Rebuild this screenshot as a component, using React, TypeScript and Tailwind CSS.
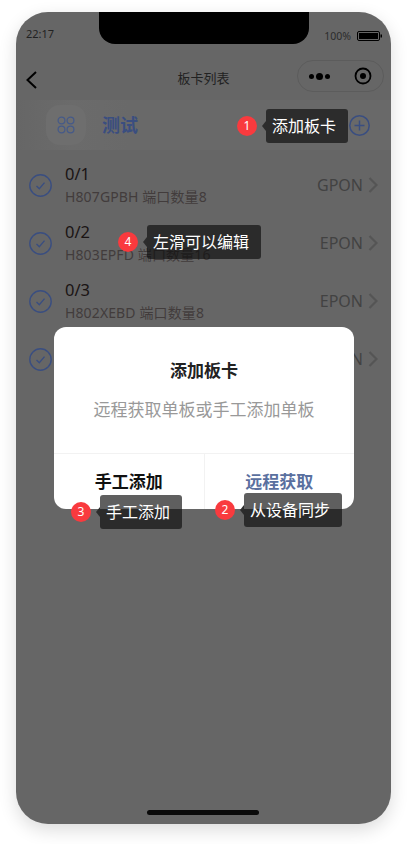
import React from "react";

function Chevron({ className }: { className: string }) {
  return (
    <svg className={className} viewBox="0 0 10 16" fill="none" stroke="currentColor" strokeWidth="2.2">
      <path d="M1.5 1 L8.5 8 L1.5 15" />
    </svg>
  );
}

function Check() {
  return (
    <svg className="w-[23px] h-[23px] shrink-0 text-[#3a4e80]" viewBox="0 0 23 23" fill="none" stroke="currentColor">
      <circle cx="11.5" cy="11.5" r="10.7" strokeWidth="1.4" />
      <path d="M7.5 12 L10.3 14.8 L15.5 8.6" strokeWidth="1.4" />
    </svg>
  );
}

function Row({ port, sub, kind }: { port: string; sub: string; kind: string }) {
  return (
    <div className="h-[58px] flex items-center pl-[13px] pr-[13px]">
      <Check />
      <div className="ml-[13px] flex-1 min-w-0">
        <div className="text-[16.5px] leading-[22px] text-[#1a1414]">{port}</div>
        <div className="mt-[2px] text-[14px] leading-[20px] tracking-[0.12px] text-[#423c3c] whitespace-nowrap">{sub}</div>
      </div>
      <div className="text-[16px] text-[#424242]">{kind}</div>
      <Chevron className="w-[10px] h-[16px] ml-[5px] text-[#555555]" />
    </div>
  );
}

function Tip({ n, text, className }: { n: string; text: string; className: string }) {
  return (
    <div className={`absolute flex items-center ${className}`}>
      <div className="w-[20px] h-[20px] rounded-full bg-[#f93a3e] text-white text-[12px] leading-[20px] text-center">{n}</div>
      <div className="ml-[5px] w-0 h-0 border-y-[5px] border-y-transparent border-r-[4px] border-r-[#2c2c2c]" />
      <div className="h-[34px] rounded-[3px] bg-[rgba(12,12,12,0.66)] pl-[6px] pr-[12px] text-[16px] leading-[34px] text-white whitespace-nowrap">{text}</div>
    </div>
  );
}

export default function App() {
  return (
    <div className="w-[415px] h-[844px] bg-white pl-[16px] pt-[12px] font-['Noto_Sans','Noto_Sans_CJK_SC',sans-serif]">
      <div className="relative w-[375px] h-[812px] rounded-[32px] overflow-hidden bg-[#666666] shadow-[0_6px_18px_rgba(0,0,0,0.14)] flex flex-col">
        {/* status bar */}
        <div className="h-[44px] flex justify-between items-start pl-[10px] pr-[9px] pt-[14px] text-[#222222]">
          <span className="text-[11px] leading-[16px]">22:17</span>
          <div className="flex items-center gap-[6px] pt-[2px]">
            <span className="text-[10.5px] leading-[16px] text-[#2c2c2c]">100%</span>
            <svg className="w-[25px] h-[10px]" viewBox="0 0 25 10">
              <rect x="0.5" y="0.5" width="22" height="9" rx="1.5" fill="none" stroke="#000" />
              <rect x="2" y="2" width="19" height="6" fill="#000" />
              <rect x="23.5" y="3.5" width="1.5" height="3" fill="#000" />
            </svg>
          </div>
        </div>
        <div className="absolute left-[83px] top-0 w-[210px] h-[32px] bg-black rounded-b-[16px]" />

        {/* nav */}
        <div className="h-[44px] relative flex items-center justify-center">
          <svg className="absolute left-[10px] top-[15px] w-[12px] h-[18px] text-black" viewBox="0 0 12 18" fill="none" stroke="currentColor" strokeWidth="2">
            <path d="M10 1 L1.5 9 L10 17" />
          </svg>
          <span className="text-[13px] text-[#222222] translate-y-[1px]">板卡列表</span>
          <div className="absolute left-[281px] top-[4px] w-[87px] h-[32px] rounded-full border border-[#5c5c5c] flex items-center pl-[11px] gap-[24px]">
            <div className="flex items-center gap-[2px]">
              <div className="w-[5px] h-[5px] rounded-full bg-black" />
              <div className="w-[7px] h-[7px] rounded-full bg-black" />
              <div className="w-[5px] h-[5px] rounded-full bg-black" />
            </div>
            <svg className="w-[18px] h-[18px]" viewBox="0 0 18 18">
              <circle cx="9" cy="9" r="7.5" fill="none" stroke="#000" strokeWidth="1.8" />
              <circle cx="9" cy="9" r="3" fill="#000" />
            </svg>
          </div>
        </div>

        {/* header */}
        <div className="h-[50px] bg-[linear-gradient(90deg,#666666_0%,#6b6b6b_15%,#696969_30%,#696969_100%)] flex items-center pl-[30px] pr-[21px]">
          <div className="w-[40px] h-[40px] rounded-[14px] bg-[#6e6e6e] flex items-center justify-center">
            <svg className="w-[18px] h-[18px]" viewBox="0 0 18 18" fill="none" stroke="#465a88" strokeWidth="1.3">
              <circle cx="4.5" cy="4.5" r="3.4" />
              <circle cx="13.5" cy="4.5" r="3.4" />
              <circle cx="4.5" cy="13.5" r="3.4" />
              <circle cx="13.5" cy="13.5" r="3.4" />
            </svg>
          </div>
          <span className="ml-[16px] text-[18px] font-bold text-[#3a4e80]">测试</span>
          <svg className="ml-auto w-[21px] h-[21px]" viewBox="0 0 21 21" fill="none" stroke="#3a4e80" strokeWidth="1.5">
            <circle cx="10.5" cy="10.5" r="9.7" />
            <path d="M10.5 5.5 V15.5 M5.5 10.5 H15.5" />
          </svg>
        </div>

        {/* list */}
        <div className="pt-[6px]">
          <Row port="0/1" sub="H807GPBH 端口数量8" kind="GPON" />
          <Row port="0/2" sub="H803EPFD 端口数量16" kind="EPON" />
          <Row port="0/3" sub="H802XEBD 端口数量8" kind="EPON" />
          <Row port="0/4" sub="H802XEBD 端口数量8" kind="EPON" />
        </div>

        {/* home indicator */}
        <div className="mt-auto h-[14px] relative">
          <div className="absolute left-[131px] top-0 w-[112px] h-[5px] rounded-full bg-[#0a0a0a]" />
        </div>

        {/* modal */}
        <div className="absolute left-[38px] top-[315px] w-[300px] h-[182px] rounded-[12px] bg-white flex flex-col">
          <div className="h-[127px] flex flex-col items-center border-b border-[#f2f2f2]">
            <div className="mt-[33px] text-[17px] leading-[22px] font-bold text-[#222222]">添加板卡</div>
            <div className="mt-[17px] text-[17px] leading-[22px] text-[#999999]">远程获取单板或手工添加单板</div>
          </div>
          <div className="flex-1 flex">
            <div className="flex-1 flex items-center justify-center border-r border-[#f2f2f2] text-[17px] font-bold text-[#111111]">手工添加</div>
            <div className="flex-1 flex items-center justify-center text-[17px] font-bold text-[#5a709f]">远程获取</div>
          </div>
        </div>

        {/* guide tips */}
        <Tip n="1" text="添加板卡" className="left-[221px] top-[97px]" />
        <Tip n="4" text="左滑可以编辑" className="left-[102px] top-[213px]" />
        <Tip n="3" text="手工添加" className="left-[55px] top-[483px]" />
        <Tip n="2" text="从设备同步" className="left-[199px] top-[481px]" />
      </div>
    </div>
  );
}
